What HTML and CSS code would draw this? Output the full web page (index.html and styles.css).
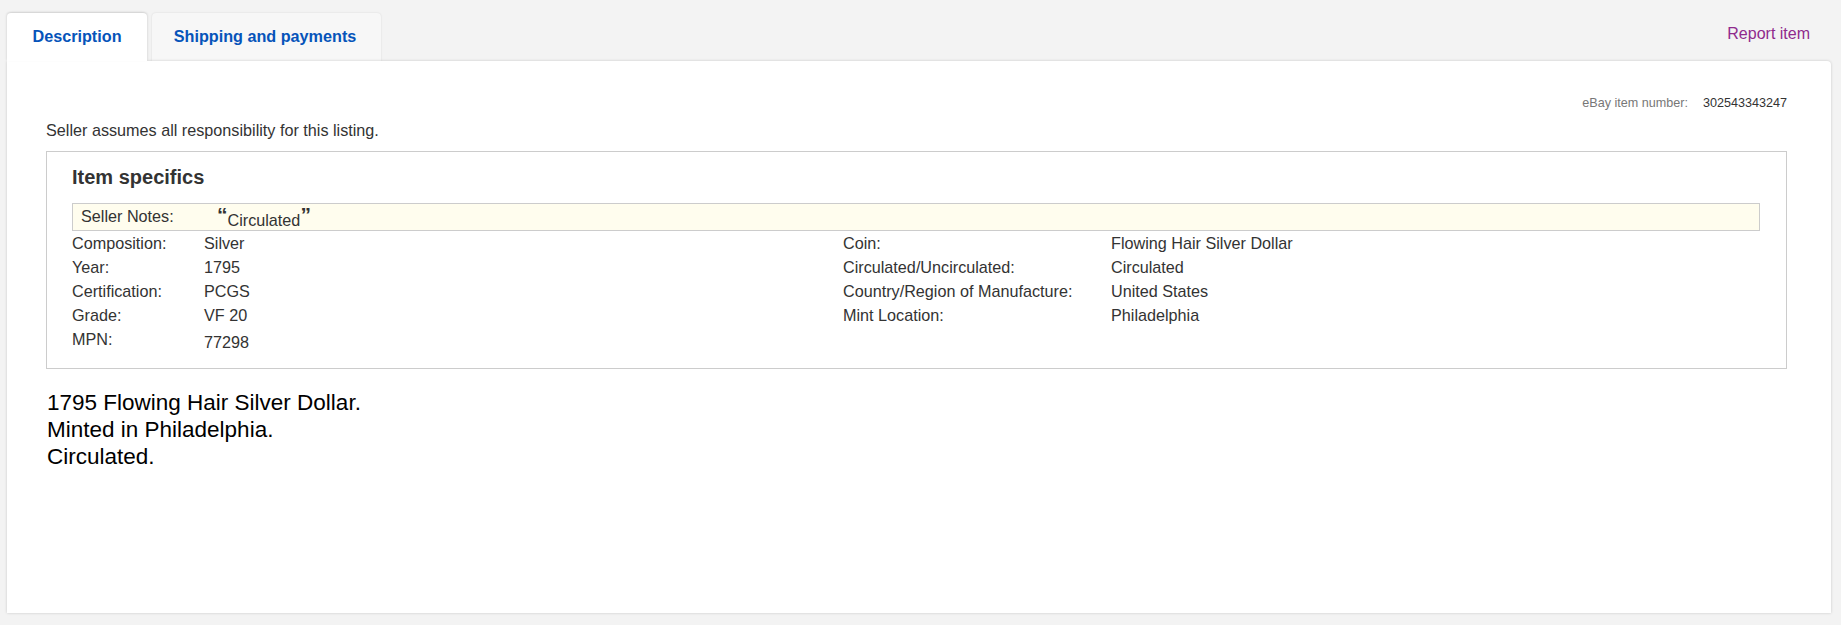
FILE: index.html
```html
<!DOCTYPE html>
<html lang="en">
<head>
<meta charset="utf-8">
<title>Item description</title>
<link rel="stylesheet" href="styles.css">
</head>
<body>
<div class="page">
  <div class="tabbar">
    <div class="tabs">
      <a class="tab tab-active" href="#">Description</a>
      <a class="tab tab-shipping" href="#">Shipping and payments</a>
    </div>
    <a class="report" href="#">Report item</a>
  </div>

  <div class="panel">
    <div class="itemnum">
      <span class="itemnum-label">eBay item number:</span>
      <span class="itemnum-value">302543343247</span>
    </div>

    <p class="responsibility">Seller assumes all responsibility for this listing.</p>

    <section class="specifics">
      <h2 class="specifics-title">Item specifics</h2>
      <div class="notes">
        <span class="notes-label">Seller Notes:</span>
        <span class="notes-value"><span class="quote">&ldquo;</span>Circulated<span class="quote">&rdquo;</span></span>
      </div>
      <div class="spec-grid">
        <span class="spec-label">Composition:</span><span class="spec-value">Silver</span>
        <span class="spec-label">Coin:</span><span class="spec-value">Flowing Hair Silver Dollar</span>

        <span class="spec-label">Year:</span><span class="spec-value">1795</span>
        <span class="spec-label">Circulated/Uncirculated:</span><span class="spec-value">Circulated</span>

        <span class="spec-label">Certification:</span><span class="spec-value">PCGS</span>
        <span class="spec-label">Country/Region of Manufacture:</span><span class="spec-value">United States</span>

        <span class="spec-label">Grade:</span><span class="spec-value">VF 20</span>
        <span class="spec-label">Mint Location:</span><span class="spec-value">Philadelphia</span>

        <span class="spec-label">MPN:</span><span class="spec-value spec-value-low">77298</span>
      </div>
    </section>

    <div class="description">
      1795 Flowing Hair Silver Dollar.<br>
      Minted in Philadelphia.<br>
      Circulated.
    </div>
  </div>
</div>
</body>
</html>
```

FILE: styles.css
```css
html, body {
  margin: 0;
  padding: 0;
}

body {
  background: #f3f3f3;
  font-family: "Liberation Sans", Arial, sans-serif;
  color: #333;
}

.page {
  padding: 13px 10px 12px 7px;
}

/* tabs row */
.tabbar {
  display: flex;
  justify-content: space-between;
  align-items: flex-start;
  height: 48px;
}

.tabs {
  display: flex;
  gap: 5px;
  height: 48px;
}

.tab {
  display: flex;
  align-items: center;
  justify-content: center;
  height: 48px;
  box-sizing: border-box;
  padding-bottom: 2px;
  font-size: 16.2px;
  font-weight: bold;
  color: #0654ba;
  text-decoration: none;
  background: #f7f7f7;
  border-radius: 4px 4px 0 0;
  box-shadow: 0 0 2px rgba(0, 0, 0, 0.12);
}

.tab-shipping {
  width: 229px;
  padding-right: 3px;
}

.tab-active {
  width: 140px;
  background: #fff;
  position: relative;
  z-index: 2;
  box-shadow: -1px -1px 2px rgba(0, 0, 0, 0.08), 1px -1px 2px rgba(0, 0, 0, 0.08);
}

.report {
  margin-top: 12px;
  margin-right: 21px;
  font-size: 16px;
  color: #8f2a8d;
  text-decoration: none;
}

/* main panel */
.panel {
  position: relative;
  z-index: 1;
  background: #fff;
  height: 552px;
  box-sizing: border-box;
  padding: 32px 44px 0 39px;
  border-radius: 0 4px 0 0;
  box-shadow: 0 0 3px rgba(0, 0, 0, 0.18);
}

.itemnum {
  display: flex;
  justify-content: flex-end;
  gap: 15px;
  font-size: 12.6px;
  line-height: 20px;
}

.itemnum-label {
  color: #777;
}

.itemnum-value {
  color: #333;
}

.responsibility {
  margin: 7px 0 0 0;
  font-size: 16.2px;
  line-height: 20px;
  color: #333;
}

/* item specifics box */
.specifics {
  margin-top: 11px;
  border: 1px solid #ccc;
  padding: 10px 26px 16px 25px;
}

.specifics-title {
  margin: 0;
  font-size: 20px;
  font-weight: bold;
  line-height: 30px;
  color: #333;
}

.notes {
  margin-top: 11px;
  height: 28px;
  box-sizing: border-box;
  border: 1px solid #ccc;
  background: #fffdee;
  display: flex;
  align-items: center;
  padding-left: 8px;
  font-size: 16.2px;
}

.notes-label {
  width: 136px;
  padding-bottom: 2px;
}

.notes-value {
  padding-top: 3px;
}

.quote {
  font-size: 21px;
  font-weight: bold;
  position: relative;
  top: -4px;
}

.spec-grid {
  display: grid;
  grid-template-columns: 132px 639px 268px 1fr;
  grid-auto-rows: 24px;
  font-size: 16.2px;
  line-height: 24px;
  margin-bottom: 1px;
}

.spec-value-low {
  position: relative;
  top: 3px;
}

/* seller description */
.description {
  margin-top: 20px;
  padding-left: 1px;
  font-size: 22.5px;
  line-height: 27px;
  color: #000;
}
```
